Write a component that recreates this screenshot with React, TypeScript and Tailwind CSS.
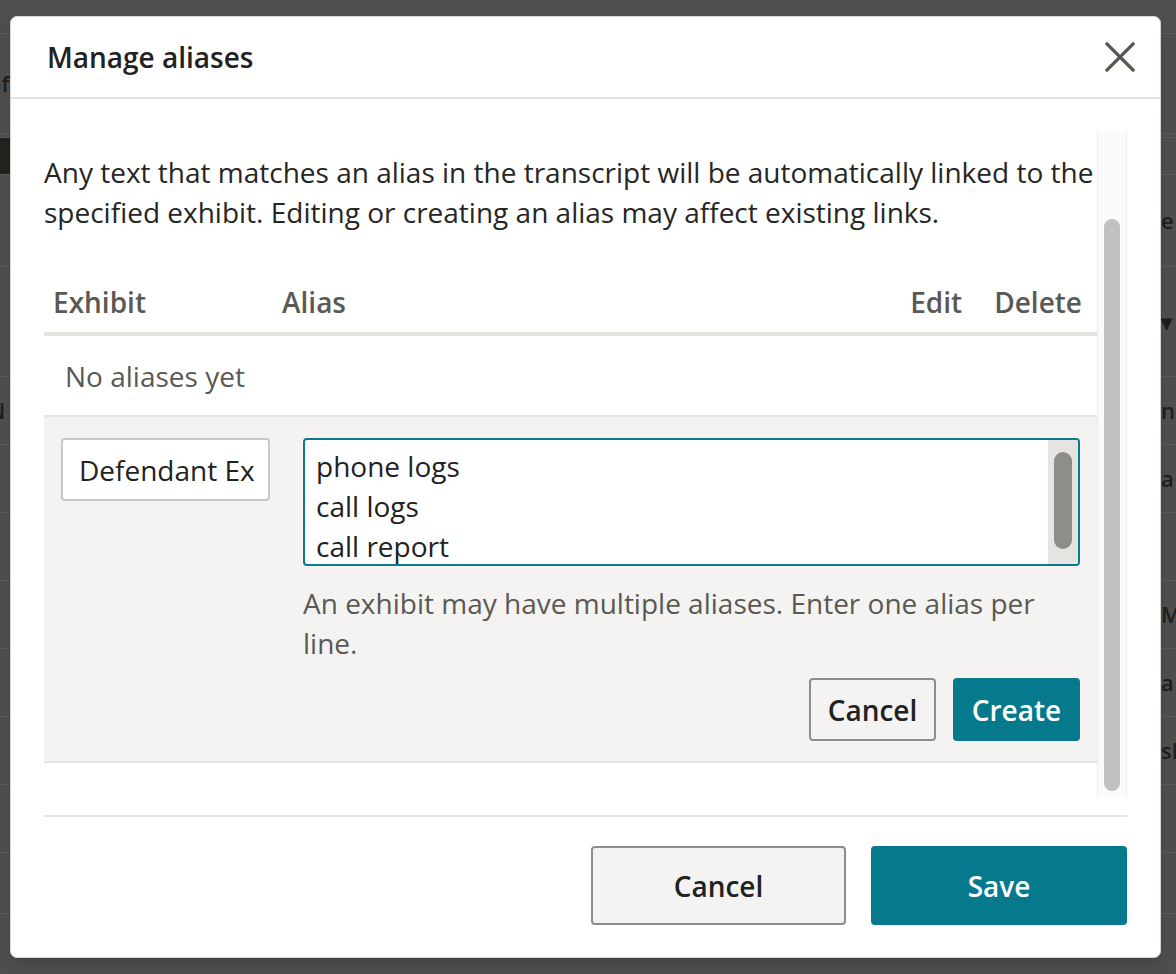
const bgRows = [
  { h: 34, left: "", right: "" },
  { h: 100, left: "of", right: "" },
  { h: 4, left: "", right: "" },
  { h: 37, left: "dark", right: "" },
  { h: 92, left: "", right: "e" },
  { h: 110, left: "", right: "▾" },
  { h: 68, left: "N", right: "n" },
  { h: 68, left: "·", right: "a" },
  { h: 68, left: "·", right: "" },
  { h: 68, left: "·", right: "Mi" },
  { h: 68, left: "·", right: "a" },
  { h: 68, left: "·", right: "sh" },
  { h: 68, left: "·", right: "" },
  { h: 61, left: "", right: "" },
];

function BackgroundPage() {
  return (
    <div className="flex flex-col">
      {bgRows.map((row, i) => (
        <div
          key={i}
          style={{ height: row.h }}
          className="flex items-center justify-between border-b border-[#5c5b58]"
        >
          <div className="w-[10px] h-full flex items-center overflow-hidden">
            {row.left === "dark" ? (
              <div className="w-[10px] h-full bg-[#23221f]" />
            ) : (
              <span className="text-[22px] font-semibold text-[#1f1e1c] -ml-[12px]">
                {row.left}
              </span>
            )}
          </div>
          <span className="text-[22px] font-semibold text-[#1f1e1c] w-[15px] overflow-hidden whitespace-nowrap">
            {row.right}
          </span>
        </div>
      ))}
    </div>
  );
}

function CloseIcon() {
  return (
    <svg width="30" height="30" viewBox="0 0 30 30" className="text-[#57564f]">
      <path
        d="M2 2 L28 28 M28 2 L2 28"
        stroke="currentColor"
        strokeWidth="3.2"
        strokeLinecap="square"
        fill="none"
      />
    </svg>
  );
}

function AliasForm() {
  return (
    <div className="bg-[#f4f3f1] border-b-2 border-[#e5e4e0] pt-[21px] pb-[20px] pl-[17px] pr-[17px] flex gap-[33px]">
      <div className="w-[209px] h-[63px] shrink-0 bg-white border-2 border-[#c9c8c4] rounded-[4px] flex items-center pl-[16px] overflow-hidden whitespace-nowrap text-[28px] text-[#222]">
        Defendant Ex
      </div>
      <div className="flex-1 flex flex-col">
        <div className="h-[128px] bg-white border-2 border-[#0a7a8c] rounded-[4px] flex overflow-hidden">
          <div className="flex-1 pl-[11px] pt-[6px] text-[28px] leading-[40px] text-[#222]">
            <div>phone logs</div>
            <div>call logs</div>
            <div>call report</div>
          </div>
          <div className="w-[30px] bg-[#e5e4e0] flex justify-center pt-[12px]">
            <div className="w-[18px] h-[97px] rounded-full bg-[#8f8d88]" />
          </div>
        </div>
        <p className="mt-[17px] text-[28px] leading-[40px] text-[#5a5954]">
          An exhibit may have multiple aliases. Enter one alias per line.
        </p>
        <div className="mt-[15px] flex justify-end gap-[17px]">
          <button className="w-[127px] h-[63px] rounded-[4px] border-2 border-[#8f8d88] bg-[#f4f3f1] text-[28px] font-semibold text-[#222]">
            Cancel
          </button>
          <button className="w-[127px] h-[63px] rounded-[4px] bg-[#067a8c] text-[28px] font-semibold text-white">
            Create
          </button>
        </div>
      </div>
    </div>
  );
}

function AliasModal() {
  return (
    <div className="absolute left-[10px] top-[16px] w-[1151px] h-[942px] rounded-[7px] bg-white border border-[#d6d5d1] shadow-lg flex flex-col">
      <div className="h-[82px] shrink-0 border-b-2 border-[#e5e4e0] flex items-center justify-between pl-[36px] pr-[25px]">
        <h2 className="text-[28px] font-semibold text-[#222]">Manage aliases</h2>
        <CloseIcon />
      </div>

      <div className="mt-[32px] mx-[33px] h-[666px] flex">
        <div className="flex-1 overflow-hidden pt-[21px]">
          <p className="text-[28px] leading-[40px] text-[#262624]">
            Any text that matches an alias in the transcript will be
            automatically linked to the specified exhibit. Editing or creating
            an alias may affect existing links.
          </p>

          <div className="mt-[40px] flex items-center py-[10px] border-b-4 border-[#e5e4e0] text-[28px] leading-[40px] font-semibold text-[#5a5954]">
            <div className="w-[238px] pl-[9px]">Exhibit</div>
            <div className="flex-1">Alias</div>
            <div className="pr-[32px]">Edit</div>
            <div className="pr-[15px]">Delete</div>
          </div>

          <div className="h-[81px] border-b-2 border-[#e5e4e0] flex items-center pl-[21px] text-[28px] text-[#5a5954]">
            No aliases yet
          </div>

          <AliasForm />
        </div>

        <div className="w-[30px] border-x border-[#ebebeb] bg-[#fafafa] flex justify-center pt-[88px] pb-[6px]">
          <div className="w-[16px] h-full rounded-full bg-[#c1c1c1]" />
        </div>
      </div>

      <div className="mt-[18px] mx-[33px] border-t-2 border-[#e5e4e0] pt-[29px] flex justify-end gap-[25px]">
        <button className="w-[255px] h-[79px] rounded-[4px] border-2 border-[#8f8d88] bg-[#f4f3f1] text-[28px] font-semibold text-[#222]">
          Cancel
        </button>
        <button className="w-[256px] h-[79px] rounded-[4px] bg-[#067a8c] text-[28px] font-semibold text-white">
          Save
        </button>
      </div>
    </div>
  );
}

export default function App() {
  return (
    <div className="relative h-[974px] w-[1176px] overflow-hidden bg-[#4f4e4c] font-['Open_Sans',sans-serif]">
      <BackgroundPage />
      <AliasModal />
    </div>
  );
}
